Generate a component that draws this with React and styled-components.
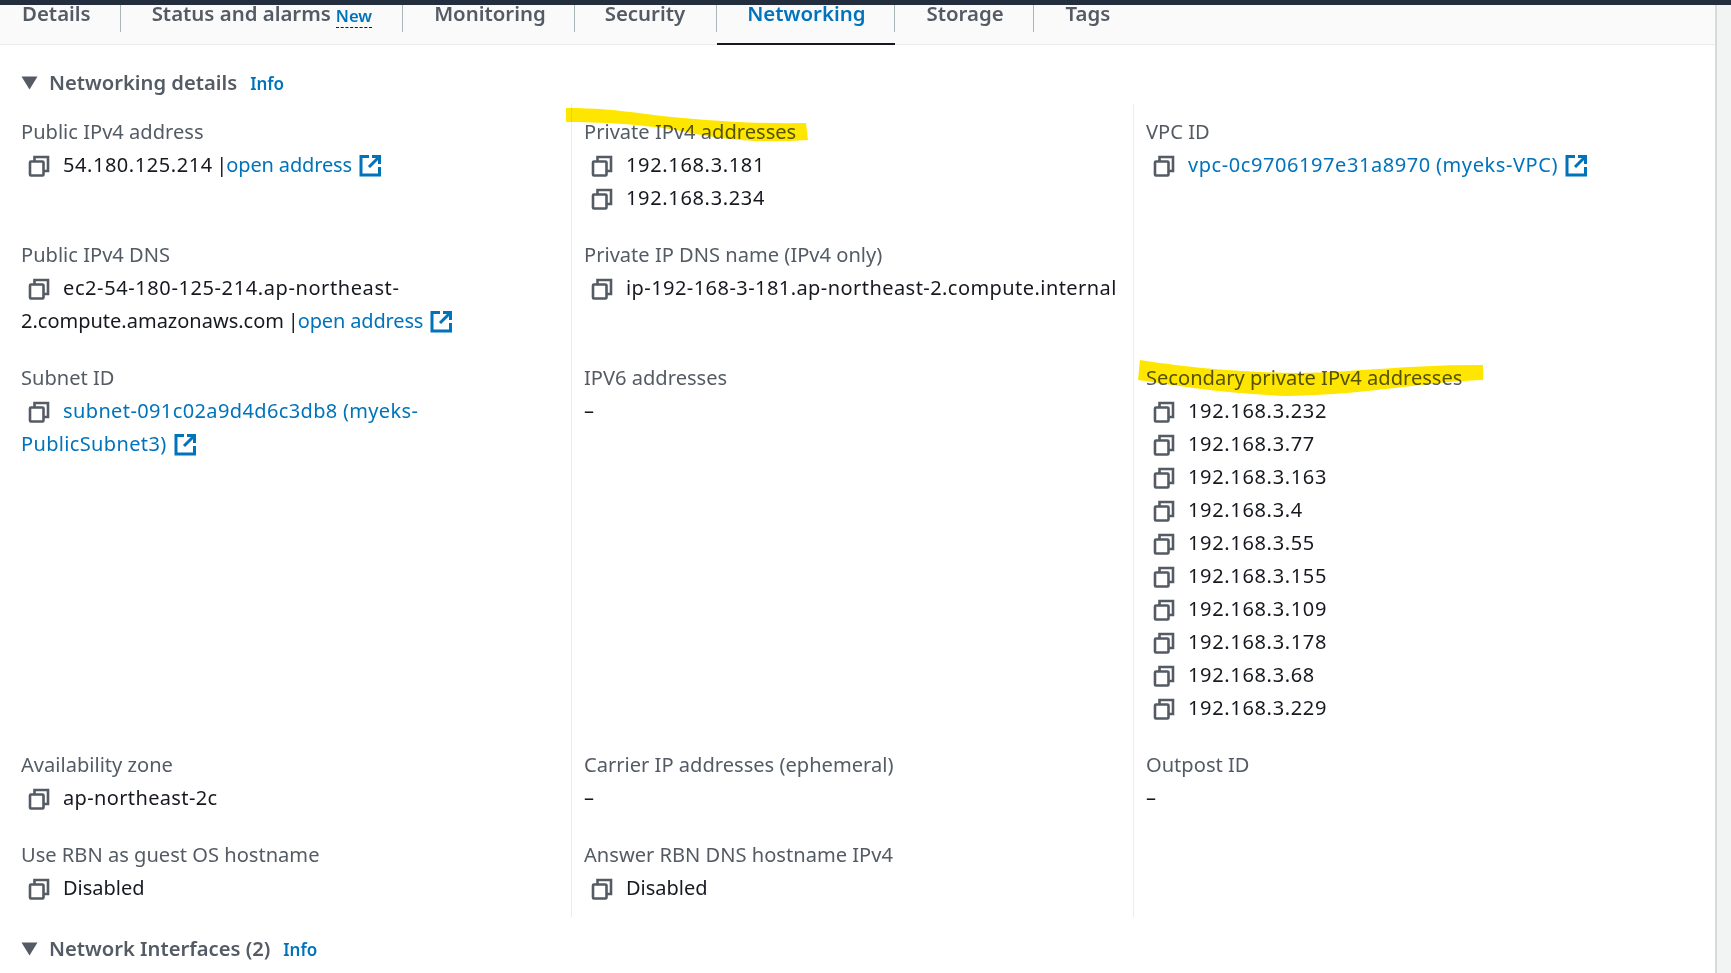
import React from "react";
import styled, { createGlobalStyle } from "styled-components";

const Global = createGlobalStyle`
  html, body { margin: 0; padding: 0; background: #fff; height: 100%; overflow: hidden; }
  body { font-family: "Noto Sans", "Open Sans", sans-serif; color: #16191f; }
`;

const Page = styled.div`
  position: relative;
  width: 1731px;
  height: 973px;
  overflow: hidden;
  background: #fff;
  display: flex;
  flex-direction: column;
`;
const TopBar = styled.div`
  height: 5px;
  background: #232f3e;
  flex: none;
`;
const Body = styled.div`
  flex: 1;
  display: flex;
  min-height: 0;
`;
const Main = styled.div`
  width: 1715px;
  flex: none;
  display: flex;
  flex-direction: column;
`;
const Edge = styled.div`
  flex: 1;
  background: #f2f3f3;
  border-left: 2px solid #d5dbdb;
`;
const TabBar = styled.div`
  height: 40px;
  box-sizing: border-box;
  background: #fafafa;
  border-bottom: 1px solid #eaeded;
  display: flex;
  align-items: flex-start;
`;
const Tab = styled.div`
  height: 40px;
  box-sizing: border-box;
  display: flex;
  align-items: flex-start;
  position: relative;
  padding: 0 ${(p) => p.$right}px 0 ${(p) => p.$left}px;
  font-size: 20.4px;
  line-height: 16px;
  font-weight: 600;
  color: ${(p) => (p.$active ? "#0073bb" : "#545b64")};
  border-bottom: ${(p) => (p.$active ? "2px solid #16191f" : "none")};
  &::after {
    content: "";
    display: ${(p) => (p.$right === 0 ? "none" : "block")};
    position: absolute;
    right: 0;
    top: 0;
    height: 27px;
    width: 1px;
    background: #aab7b8;
  }
`;
const NewBadge = styled.span`
  font-size: 16.6px;
  font-weight: 600;
  color: #0073bb;
  margin-left: 5px;
  margin-top: 2px;
  height: 21px;
  line-height: 18px;
  box-sizing: border-box;
  border-bottom: 1px dashed #16191f;
`;
const SectionHead = styled.div`
  display: flex;
  align-items: center;
  height: 30px;
  padding-left: 21px;
  margin-top: ${(p) => p.$top}px;
  font-size: 20.2px;
  font-weight: 600;
  color: #545b64;
`;
const Caret = styled.svg`
  width: 17px;
  height: 14px;
  margin: 2px 11px 0 0;
  flex: none;
`;
const InfoLink = styled.a`
  font-size: 17px;
  font-weight: 600;
  color: #0073bb;
  margin: 2px 0 0 13px;
`;
const Grid = styled.div`
  display: grid;
  grid-template-columns: 550px 562px 1fr;
  margin: 7px 0 0 21px;
`;
const Cell = styled.div`
  box-sizing: border-box;
  padding: ${(p) => (p.$first ? 11 : 0)}px 0 ${(p) => (p.$end ? 13 : 24)}px ${(p) => (p.$col === 0 ? 0 : 12)}px;
  border-left: ${(p) => (p.$col === 0 ? "none" : "1px solid #eaeded")};
`;
const Label = styled.div`
  font-size: 20.1px;
  line-height: 33px;
  height: 33px;
  color: #545b64;
  white-space: nowrap;
`;
const Value = styled.div`
  font-size: 20px;
  line-height: 33px;
  color: #16191f;
  white-space: ${(p) => (p.$wrap ? "normal" : "nowrap")};
  max-width: ${(p) => (p.$wrap ? "440px" : "none")};
`;
const Wide = styled.span`
  letter-spacing: ${(p) => p.$by}px;
`;
const Pipe = styled.span`
  margin-left: -1.5px;
`;
const CopyWrap = styled.svg`
  width: 22px;
  height: 22px;
  display: inline-block;
  vertical-align: -5px;
  margin: 0 13px 0 7px;
`;
const Ext = styled.svg`
  width: 23px;
  height: 23px;
  display: inline-block;
  vertical-align: -5px;
  margin-left: 7px;
`;
const Link = styled.a`
  color: #0073bb;
`;
const AddressLink = styled(Link)`
  margin-left: -1px;
  letter-spacing: -0.15px;
`;
const Marker = styled.svg`
  position: absolute;
  left: ${(p) => p.$x}px;
  top: ${(p) => p.$y}px;
  mix-blend-mode: multiply;
  pointer-events: none;
`;

const Copy = () => (
  <CopyWrap viewBox="0 0 22 22" fill="none" stroke="#545b64" strokeWidth="2.6">
    <rect x="2" y="6.5" width="13.5" height="14" rx="1" />
    <path d="M6.5 6V2h13.5v14h-4" />
  </CopyWrap>
);
const External = () => (
  <Ext viewBox="0 0 23 23" fill="none" stroke="#0073bb" strokeWidth="3">
    <path d="M10 2.5H2v18.5h18.5V13" />
    <path d="M13 2.5h7.5V10M20 3 10 13" />
  </Ext>
);
const Triangle = () => (
  <Caret viewBox="0 0 17 14">
    <path d="M0.5 0.5h16L8.5 13.5z" fill="#545b64" />
  </Caret>
);

const Dash = "–";
const secondary = ["192.168.3.232","192.168.3.77","192.168.3.163","192.168.3.4","192.168.3.55","192.168.3.155","192.168.3.109","192.168.3.178","192.168.3.68","192.168.3.229"];

const Ip = ({ children, by = 0.66 }) => (
  <Value><Copy /><Wide $by={by}>{children}</Wide></Value>
);

export default function App() {
  return (
    <Page>
      <Global />
      <TopBar />
      <Body>
        <Main>
          <TabBar>
            <Tab $left={22} $right={30}>Details</Tab>
            <Tab $left={31} $right={31}>Status and alarms<NewBadge>New</NewBadge></Tab>
            <Tab $left={31} $right={29}>Monitoring</Tab>
            <Tab $left={30} $right={32}>Security</Tab>
            <Tab $left={30} $right={30} $active>Networking</Tab>
            <Tab $left={31} $right={30}>Storage</Tab>
            <Tab $left={32} $right={0}>Tags</Tab>
          </TabBar>
          <SectionHead $top={22}><Triangle />Networking details<InfoLink>Info</InfoLink></SectionHead>
          <Grid>
            <Cell $col={0} $first>
              <Label>Public IPv4 address</Label>
              <Value><Copy /><Wide $by={0.55}>54.180.125.214</Wide> <Pipe>|</Pipe><AddressLink>open address</AddressLink><External /></Value>
              <Value>&nbsp;</Value>
            </Cell>
            <Cell $col={1} $first>
              <Label>Private IPv4 addresses</Label>
              <Ip>192.168.3.181</Ip>
              <Ip>192.168.3.234</Ip>
            </Cell>
            <Cell $col={2} $first>
              <Label>VPC ID</Label>
              <Value><Copy /><Link><Wide $by={0.57}>vpc-0c9706197e31a8970</Wide> <Wide $by={0.6}>(myeks-VPC)</Wide></Link><External /></Value>
            </Cell>

            <Cell $col={0}>
              <Label>Public IPv4 DNS</Label>
              <Value $wrap><Copy /><Wide $by={0.6}>ec2-54-180-125-214.ap-northeast-</Wide>2.compute.amazonaws.com <Pipe>|</Pipe><AddressLink>open address</AddressLink><External /></Value>
            </Cell>
            <Cell $col={1}>
              <Label>Private IP DNS name (IPv4 only)</Label>
              <Ip by={0.44}>ip-192-168-3-181.ap-northeast-2.compute.internal</Ip>
            </Cell>
            <Cell $col={2} />

            <Cell $col={0}>
              <Label>Subnet ID</Label>
              <Value $wrap><Copy /><Link><Wide $by={0.38}>subnet-091c02a9d4d6c3db8</Wide> <Wide $by={0.35}>(myeks-PublicSubnet3)</Wide></Link><External /></Value>
            </Cell>
            <Cell $col={1}>
              <Label>IPV6 addresses</Label>
              <Value>{Dash}</Value>
            </Cell>
            <Cell $col={2}>
              <Label>Secondary private IPv4 addresses</Label>
              {secondary.map((ip) => <Ip key={ip}>{ip}</Ip>)}
            </Cell>

            <Cell $col={0}>
              <Label>Availability zone</Label>
              <Ip by={0.36}>ap-northeast-2c</Ip>
            </Cell>
            <Cell $col={1}>
              <Label>Carrier IP addresses (ephemeral)</Label>
              <Value>{Dash}</Value>
            </Cell>
            <Cell $col={2}>
              <Label>Outpost ID</Label>
              <Value>{Dash}</Value>
            </Cell>

            <Cell $col={0} $end>
              <Label>Use RBN as guest OS hostname</Label>
              <Ip by={0}>Disabled</Ip>
            </Cell>
            <Cell $col={1} $end>
              <Label>Answer RBN DNS hostname IPv4</Label>
              <Ip by={0}>Disabled</Ip>
            </Cell>
            <Cell $col={2} $end />
          </Grid>
          <SectionHead $top={16}><Triangle />Network Interfaces (2)<InfoLink>Info</InfoLink></SectionHead>
        </Main>
        <Edge />
      </Body>
      <Marker $x={566} $y={108} width="242" height="35" viewBox="0 0 242 35">
        <path d="M0 0C30 0 50 2 80 6C130 12 180 16 240 15L242 32C200 35 160 33 120 24C80 16 30 14 0 14Z" fill="#ffe600" />
      </Marker>
      <Marker $x={1138} $y={360} width="346" height="38" viewBox="0 0 346 38">
        <path d="M2 0C40 6 90 12 160 13C220 12 280 4 345 5L345 20C280 22 240 34 150 36C90 34 40 26 0 20Z" fill="#ffe600" />
      </Marker>
    </Page>
  );
}
